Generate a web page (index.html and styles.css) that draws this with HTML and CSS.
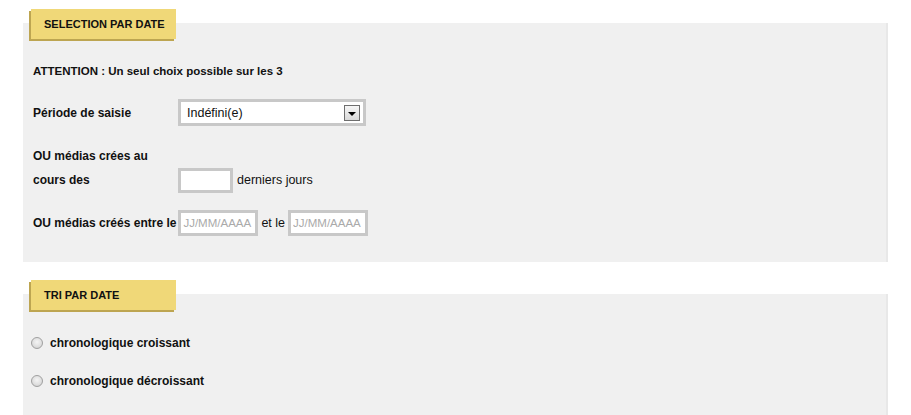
FILE: index.html
```html
<!DOCTYPE html>
<html lang="fr">

<head>
  <meta charset="UTF-8">
  <meta name="viewport" content="width=device-width, initial-scale=1.0">
  <title>Recherche de médias</title>
  <link rel="stylesheet" href="styles.css">
</head>

<body>

  <div class="wrap">

    <!-- Selection par date -->
    <div class="panel panel-first">
      <div class="tab">SELECTION PAR DATE</div>

      <p class="note">ATTENTION : Un seul choix possible sur les 3</p>

      <div class="row row-select">
        <span class="label">Période de saisie</span>
        <div class="select">
          <span>Indéfini(e)</span>
          <span class="select-btn"><span class="arrow"></span></span>
        </div>
      </div>

      <div class="row row-days">
        <span class="label">OU médias crées au cours des</span>
        <input class="field field-days" type="text">
        <span class="plain">derniers jours</span>
      </div>

      <div class="row row-dates">
        <span>OU médias créés entre le</span>
        <input class="field field-date" type="text" placeholder="JJ/MM/AAAA">
        <span class="plain">et le</span>
        <input class="field field-date" type="text" placeholder="JJ/MM/AAAA">
      </div>
    </div>

    <!-- Tri par date -->
    <div class="panel panel-second">
      <div class="tab">TRI PAR DATE</div>

      <label class="radio-row radio-first">
        <input type="radio" name="tri">
        <span>chronologique croissant</span>
      </label>
      <label class="radio-row">
        <input type="radio" name="tri">
        <span>chronologique décroissant</span>
      </label>
    </div>

  </div>

</body>

</html>
```

FILE: styles.css
```css
body {
  font-family: "Liberation Sans", Arial, sans-serif;
  font-size: 12px;
  font-weight: bold;
  color: #111;
  margin: 0;
  padding: 0;
  background-color: #fff;
}

.wrap {
  padding: 0 23px;
}

.panel {
  display: flow-root;
  background-color: #f0f0f0;
  border-right: 2px solid #e8e8e8;
}

.panel-first {
  margin-top: 23px;
  padding-bottom: 26px;
}

.panel-second {
  margin-top: 32px;
  height: 140px;
}

.tab {
  box-sizing: border-box;
  width: 145px;
  height: 30px;
  line-height: 30px;
  margin: -14px 0 0 8px;
  padding-left: 13px;
  background-color: #f0d878;
  box-shadow: -2px 2px 0 #bda551;
  color: #111;
  font-size: 11px;
}

.note {
  margin: 25px 0 0 10px;
  line-height: 14px;
  font-size: 11.5px;
}

.row {
  display: flex;
  align-items: center;
  margin-left: 10px;
}

.label {
  width: 145px;
  flex-shrink: 0;
}

.plain {
  font-weight: normal;
  font-size: 12.5px;
}

.row-select {
  margin-top: 21px;
}

.select {
  box-sizing: border-box;
  width: 188px;
  height: 27px;
  border: 3px solid #c8c8c8;
  background-color: #fff;
  display: flex;
  align-items: center;
  justify-content: space-between;
  padding: 0 3px 0 6px;
  font-weight: normal;
  font-size: 12.5px;
}

.select-btn {
  box-sizing: border-box;
  width: 16px;
  height: 16px;
  border: 1px solid #6e6e6e;
  background: linear-gradient(#f6f6f6, #d9d9d9);
  display: flex;
  align-items: center;
  justify-content: center;
}

.arrow {
  width: 0;
  height: 0;
  margin-top: 2px;
  border-left: 4px solid transparent;
  border-right: 4px solid transparent;
  border-top: 4px solid #000;
}

.row-days {
  margin-top: 18px;
  align-items: flex-end;
}

.row-days .label {
  width: 120px;
  margin-right: 25px;
  line-height: 24px;
}

.row-days .plain {
  margin-left: 4px;
  line-height: 24px;
}

.field {
  box-sizing: border-box;
  border: 3px solid #c8c8c8;
  background-color: #fff;
  margin: 0;
  padding: 0 2px;
  font-family: "Liberation Sans", Arial, sans-serif;
  font-size: 11.5px;
  outline: none;
}

.field::placeholder {
  color: #aaa;
}

.field-days {
  width: 55px;
  height: 25px;
  margin-bottom: -1px;
}

.row-dates {
  margin-top: 18px;
}

.row-dates .field-date {
  width: 80px;
  height: 26px;
  margin-left: 2px;
}

.row-dates .plain {
  margin-left: 3px;
  margin-right: 1px;
}

.radio-row {
  display: flex;
  align-items: center;
  height: 20px;
  margin: 18px 0 0 8px;
}

.radio-first {
  margin-top: 23px;
}

.radio-row input {
  appearance: none;
  width: 12px;
  height: 12px;
  margin: 0 7px 0 0;
  border: 1px solid #a0a0a0;
  border-radius: 50%;
  background: radial-gradient(circle at 50% 40%, #f4f4f4 0, #e0e0e0 55%, #c8c8c8 100%);
  box-sizing: border-box;
}
```
